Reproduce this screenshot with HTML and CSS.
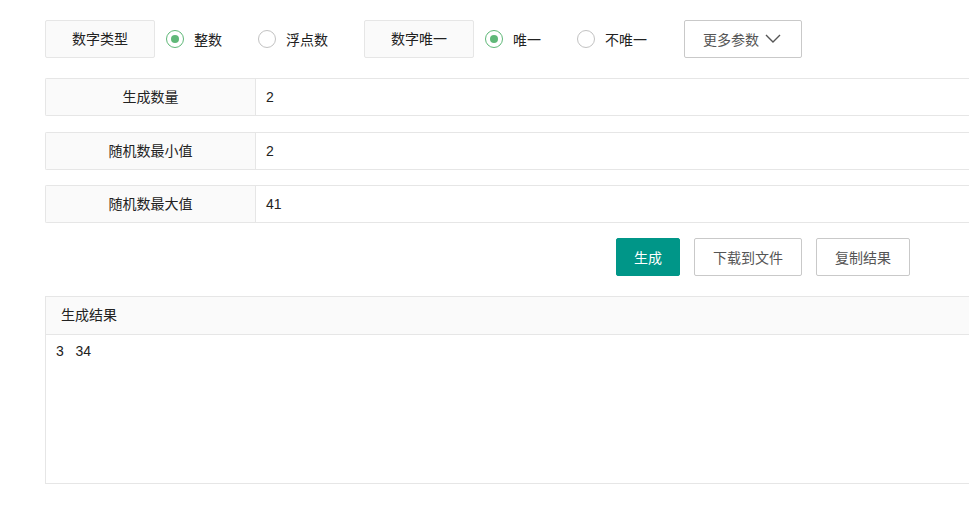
FILE: index.html
```html
<!DOCTYPE html>
<html lang="zh-CN">
<head>
    <meta charset="UTF-8">
    <title>随机数生成器</title>
    <link rel="stylesheet" href="styles.css">
</head>
<body>
    <div class="container">
        <div class="options">
            <div class="opt-label">数字类型</div>
            <label class="radio checked"><i></i>整数</label>
            <label class="radio"><i></i>浮点数</label>
            <div class="opt-label">数字唯一</div>
            <label class="radio checked"><i></i>唯一</label>
            <label class="radio"><i></i>不唯一</label>
            <button class="btn more-btn">更多参数
                <svg width="16" height="10" viewBox="0 0 16 10"><path d="M1 1 L8 8 L15 1" fill="none" stroke="#555" stroke-width="1.4"/></svg>
            </button>
        </div>
        <div class="field">
            <div class="field-label">生成数量</div>
            <div class="field-input">2</div>
        </div>
        <div class="field mid">
            <div class="field-label">随机数最小值</div>
            <div class="field-input">2</div>
        </div>
        <div class="field last">
            <div class="field-label">随机数最大值</div>
            <div class="field-input">41</div>
        </div>
        <div class="actions">
            <button class="btn primary">生成</button>
            <button class="btn">下载到文件</button>
            <button class="btn">复制结果</button>
        </div>
        <div class="result">
            <div class="result-head">生成结果</div>
            <div class="result-body">3&nbsp;&nbsp;&nbsp;34</div>
        </div>
    </div>
</body>
</html>
```

FILE: styles.css
```css
body {
    margin: 0;
    font-family: "Liberation Sans", "Noto Sans CJK SC", sans-serif;
    font-size: 14px;
    color: #333;
    background: #fff;
    overflow: hidden;
}
.container {
    padding: 20px 0 0 45px;
    width: 1000px;
}
.options {
    display: flex;
    align-items: center;
    height: 38px;
}
.opt-label {
    width: 108px;
    height: 36px;
    line-height: 36px;
    text-align: center;
    background-color: #fafafa;
    border: 1px solid #e6e6e6;
    border-radius: 2px;
    color: #222;
}
.radio + .opt-label {
    margin-left: 11px;
}
.radio {
    display: flex;
    align-items: center;
    margin-left: 11px;
    margin-right: 25px;
    color: #222;
}
.radio i {
    width: 16px;
    height: 16px;
    border: 1px solid #c2c2c2;
    border-radius: 50%;
    margin-right: 10px;
    box-sizing: content-box;
    display: flex;
    align-items: center;
    justify-content: center;
}
.radio.checked i {
    border-color: #5fb878;
}
.radio.checked i::after {
    content: "";
    width: 8px;
    height: 8px;
    border-radius: 50%;
    background-color: #5fb878;
}
.btn {
    height: 38px;
    padding: 0 18px;
    border: 1px solid #c9c9c9;
    border-radius: 2px;
    background-color: #fff;
    color: #555;
    font-family: inherit;
    font-size: 14px;
    cursor: pointer;
}
.more-btn {
    margin-left: 12px;
    width: 118px;
    display: flex;
    align-items: center;
    gap: 6px;
}
.field {
    display: flex;
    height: 38px;
    margin-top: 20px;
    border: 1px solid #e6e6e6;
    border-right: none;
    border-radius: 2px 0 0 2px;
    box-sizing: border-box;
}
.field.mid {
    margin-top: 16px;
}
.field.last {
    margin-top: 15px;
}
.field-label {
    width: 209px;
    line-height: 36px;
    text-align: center;
    background-color: #fafafa;
    border-right: 1px solid #e6e6e6;
    color: #222;
}
.field-input {
    flex: 1;
    line-height: 36px;
    padding-left: 10px;
    color: #222;
}
.actions {
    display: flex;
    justify-content: flex-end;
    gap: 14px;
    margin-top: 15px;
    padding-right: 135px;
}
.btn.primary {
    background-color: #009688;
    border-color: #009688;
    color: #fff;
    width: 64px;
    padding: 0;
}
.result {
    margin-top: 20px;
    border: 1px solid #e6e6e6;
    border-right: none;
    height: 188px;
    box-sizing: border-box;
}
.result-head {
    height: 37px;
    line-height: 37px;
    padding-left: 15px;
    background-color: #fafafa;
    border-bottom: 1px solid #e6e6e6;
    color: #222;
}
.result-body {
    padding: 6px 10px;
    line-height: 20px;
    color: #222;
}
```
